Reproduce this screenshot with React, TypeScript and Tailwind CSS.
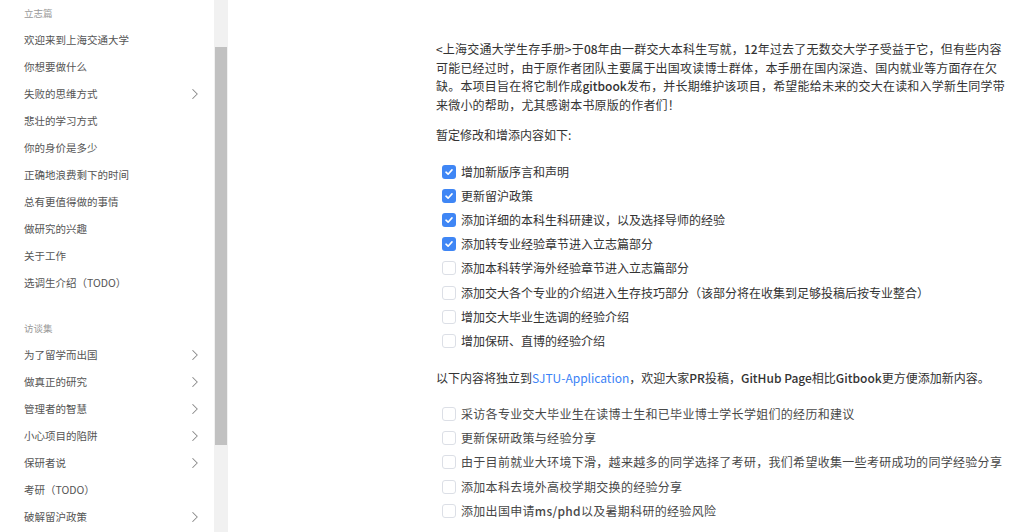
import React from "react";
import { ChevronRight } from "lucide-react";

type NavItem = { label: string; arrow?: boolean };

const section1: NavItem[] = [
  { label: "欢迎来到上海交通大学" },
  { label: "你想要做什么" },
  { label: "失败的思维方式", arrow: true },
  { label: "悲壮的学习方式" },
  { label: "你的身价是多少" },
  { label: "正确地浪费剩下的时间" },
  { label: "总有更值得做的事情" },
  { label: "做研究的兴趣" },
  { label: "关于工作" },
  { label: "选调生介绍（TODO）" },
];

const section2: NavItem[] = [
  { label: "为了留学而出国", arrow: true },
  { label: "做真正的研究", arrow: true },
  { label: "管理者的智慧", arrow: true },
  { label: "小心项目的陷阱", arrow: true },
  { label: "保研者说", arrow: true },
  { label: "考研（TODO）" },
  { label: "破解留沪政策", arrow: true },
];

const todo1: { text: React.ReactNode; done: boolean }[] = [
  { text: "增加新版序言和声明", done: true },
  { text: "更新留沪政策", done: true },
  { text: "添加详细的本科生科研建议，以及选择导师的经验", done: true },
  { text: "添加转专业经验章节进入立志篇部分", done: true },
  { text: "添加本科转学海外经验章节进入立志篇部分", done: false },
  { text: "添加交大各个专业的介绍进入生存技巧部分（该部分将在收集到足够投稿后按专业整合）", done: false },
  { text: "增加交大毕业生选调的经验介绍", done: false },
  { text: "增加保研、直博的经验介绍", done: false },
];

const todo2: React.ReactNode[] = [
  "采访各专业交大毕业生在读博士生和已毕业博士学长学姐们的经历和建议",
  "更新保研政策与经验分享",
  "由于目前就业大环境下滑，越来越多的同学选择了考研，我们希望收集一些考研成功的同学经验分享",
  "添加本科去境外高校学期交换的经验分享",
  <>
    添加出国申请<span className="font-medium">ms/phd</span>以及暑期科研的经验风险
  </>,
];

function Checkbox({ checked }: { checked: boolean }) {
  if (checked) {
    return (
      <span className="flex h-[14px] w-[14px] shrink-0 items-center justify-center rounded-[3px] bg-[#3f86f5]">
        <svg width="10" height="10" viewBox="0 0 10 10" fill="none">
          <path d="M2 5.2 L4.1 7.2 L8 2.9" stroke="#fff" strokeWidth="1.6" strokeLinecap="round" strokeLinejoin="round" />
        </svg>
      </span>
    );
  }
  return <span className="h-[14px] w-[14px] shrink-0 rounded-[3px] border border-[#dcdfe6] bg-white" />;
}

function NavRow({ item }: { item: NavItem }) {
  return (
    <div className="flex h-[27px] items-center justify-between pl-[24px] pr-[10px] text-[10.5px] text-[#555]">
      <span>{item.label}</span>
      {item.arrow && <ChevronRight size={18} strokeWidth={1.4} color="#888" />}
    </div>
  );
}

export default function App() {
  return (
    <div
      className="flex h-[532px] w-[1024px] overflow-hidden bg-white"
      style={{ fontFamily: '"Noto Sans CJK SC", "Noto Sans", sans-serif' }}
    >
      <aside className="flex w-[214px] shrink-0 flex-col">
        <div className="flex h-[26px] items-center pl-[24px] text-[9.5px] text-[#999]">立志篇</div>
        {section1.map((it) => (
          <NavRow key={it.label} item={it} />
        ))}
        <div className="mt-[19px] flex h-[26px] items-center pl-[24px] text-[9.5px] text-[#999]">访谈集</div>
        {section2.map((it) => (
          <NavRow key={it.label} item={it} />
        ))}
      </aside>
      <div className="flex w-[14px] shrink-0 flex-col bg-[#f1f1f1] pt-[47px]">
        <div className="mx-[1px] h-[398px] bg-[#c1c1c1]" />
      </div>
      <main className="flex-1 pl-[208px] pt-[40px] text-[12px] text-[#333]">
        <div className="w-[570px]">
          <p className="leading-[18.5px] tracking-[0.2px]">
            &lt;上海交通大学生存手册&gt;于<span className="font-medium tracking-normal">08</span>年由一群交大本科生写就，
            <span className="font-medium tracking-normal">12</span>
            年过去了无数交大学子受益于它，但有些内容可能已经过时，由于原作者团队主要属于出国攻读博士群体，本手册在国内深造、国内就业等方面存在欠缺。本项目旨在将它制作成
            <span className="font-medium tracking-normal">gitbook</span>
            发布，并长期维护该项目，希望能给未来的交大在读和入学新生同学带来微小的帮助，尤其感谢本书原版的作者们！
          </p>
          <p className="mt-[12px] leading-[18px]">暂定修改和增添内容如下:</p>
          <ul className="mt-[16px] flex flex-col">
            {todo1.map((t, i) => (
              <li key={i} className="flex h-[24.1px] items-center gap-[5px] pl-[6px]">
                <Checkbox checked={t.done} />
                <span>{t.text}</span>
              </li>
            ))}
          </ul>
          <p className="mt-[16px] leading-[18px]">
            以下内容将独立到<span className="text-[#3b82f6]">SJTU-Application</span>，欢迎大家
            <span className="font-medium">PR</span>投稿，<span className="font-medium">GitHub Page</span>相比
            <span className="font-medium">Gitbook</span>更方便添加新内容。
          </p>
          <ul className="mt-[15px] flex flex-col text-[#484848]">
            {todo2.map((t, i) => (
              <li key={i} className="flex h-[24.25px] items-center gap-[5px] pl-[6px]">
                <Checkbox checked={false} />
                <span className="tracking-[0.3px]">{t}</span>
              </li>
            ))}
          </ul>
        </div>
      </main>
    </div>
  );
}
